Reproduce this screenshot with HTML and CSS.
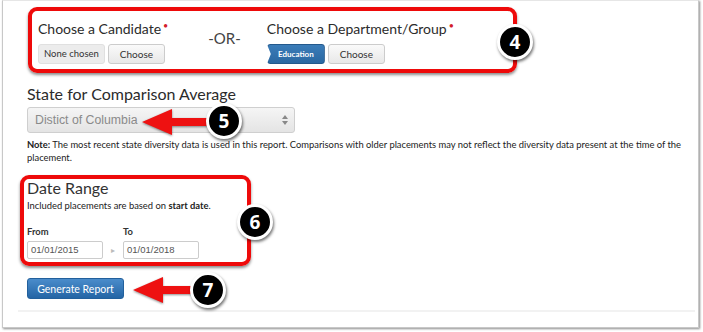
FILE: index.html
```html
<!DOCTYPE html>
<html lang="en">
<head>
    <meta charset="UTF-8"/>
    <title>Comparison Report</title>
    <link rel="stylesheet" href="styles.css">
</head>
<body>
<div class="frame">
    <div class="pickers">
        <div class="picker">
            <div class="picker-title">Choose a Candidate<span class="req">&bull;</span></div>
            <div class="picker-btns">
                <span class="chip">None chosen</span>
                <button class="btn">Choose</button>
            </div>
        </div>
        <div class="or">-OR-</div>
        <div class="picker">
            <div class="picker-title">Choose a Department/Group<span class="req">&bull;</span></div>
            <div class="picker-btns">
                <span class="tag">Education</span>
                <button class="btn">Choose</button>
            </div>
        </div>
    </div>

    <div class="field">
        <div class="field-label">State for Comparison Average</div>
        <div class="select">
            <span>Distict of Columbia</span>
            <svg class="updown" width="6" height="10" viewBox="0 0 6 10">
                <path d="M0 4 L3 0 L6 4 Z M0 6 L3 10 L6 6 Z" fill="#888"/>
            </svg>
        </div>
        <p class="note"><b>Note:</b> The most recent state diversity data is used in this report. Comparisons with older placements may not reflect the diversity data present at the time of the placement.</p>
    </div>

    <div class="dates">
        <div class="dates-title">Date Range</div>
        <p class="hint">Included placements are based on <b>start date</b>.</p>
        <div class="date-row">
            <div class="date-col">
                <div class="date-label">From</div>
                <div class="date-input">01/01/2015</div>
            </div>
            <span class="sep">&#9656;</span>
            <div class="date-col">
                <div class="date-label">To</div>
                <div class="date-input">01/01/2018</div>
            </div>
        </div>
    </div>

    <button class="gen">Generate Report</button>
    <div class="rule"></div>
</div>

<!-- annotations -->
<div class="mark-box box4"></div>
<div class="mark-box box6"></div>

<svg class="arrow arrow5" width="72" height="30" viewBox="0 0 72 30">
    <path d="M0 15 L30 2 L30 11 L72 11 L72 19 L30 19 L30 28 Z" fill="#ee1111"/>
</svg>
<svg class="arrow arrow7" width="68" height="30" viewBox="0 0 68 30">
    <path d="M0 15 L30 2 L30 11 L68 11 L68 19 L30 19 L30 28 Z" fill="#ee1111"/>
</svg>

<div class="badge badge4">4</div>
<div class="badge badge5">5</div>
<div class="badge badge6">6</div>
<div class="badge badge7">7</div>
</body>
</html>
```

FILE: styles.css
```css
body {
    margin: 0;
    background: #ffffff;
    font-family: Lato, "Open Sans", sans-serif;
    color: #333333;
    position: relative;
    width: 703px;
    height: 332px;
    overflow: hidden;
}

.frame {
    margin-left: 2px;
    width: 697px;
    height: 328px;
    box-sizing: border-box;
    border: 1px solid #c8c8c8;
    border-top-color: #e6e6e6;
    box-shadow: 1px 1px 2px rgba(0, 0, 0, 0.45);
    background: #ffffff;
    padding: 15px 0 0 24px;
}

/* candidate / department */
.pickers {
    display: flex;
    align-items: flex-start;
    padding-left: 11px;
}

.picker-title {
    font-size: 14px;
    line-height: 20px;
    color: #2b2b2b;
}

.req {
    color: #d3202a;
    font-size: 9px;
    vertical-align: 5px;
    margin-left: 2px;
}

.picker-btns {
    display: flex;
    gap: 3px;
    margin-top: 5px;
}

.chip,
.btn,
.tag {
    height: 20px;
    box-sizing: border-box;
    font-family: Lato, sans-serif;
    font-size: 9.5px;
    line-height: 18px;
    border-radius: 3px;
}

.chip {
    padding: 0 5px;
    background: #ececec;
    border: 1px solid #e0e0e0;
    color: #333333;
}

.btn {
    width: 57px;
    padding: 0;
    background: linear-gradient(#fafafa, #e8e8e8);
    border: 1px solid #cccccc;
    color: #333333;
    font-size: 10px;
}

.tag {
    width: 58px;
    text-align: center;
    background: linear-gradient(#3b7cb8, #2a68a2);
    border: 1px solid #24598c;
    color: #ffffff;
    font-weight: bold;
    font-size: 8px;
    clip-path: polygon(0 0, 100% 0, 100% 100%, 0 100%, 4px 50%);
}

.or {
    font-size: 15px;
    color: #444444;
    margin: 13px 26px 0 40px;
}

/* state select */
.field {
    margin-top: 20px;
}

.field-label {
    font-size: 16px;
    line-height: 20px;
    color: #2b2b2b;
}

.select {
    width: 268px;
    height: 26px;
    box-sizing: border-box;
    margin-top: 3px;
    display: flex;
    align-items: center;
    justify-content: space-between;
    padding: 0 6px 0 7px;
    border: 1px solid #cfcfcf;
    border-radius: 3px;
    background: linear-gradient(#f5f5f5, #e4e4e4);
    font-family: "Liberation Sans", Arial, sans-serif;
    font-size: 12.3px;
    color: #8a8a8a;
}

.note {
    margin: 5px 10px 0 0;
    font-size: 9.4px;
    line-height: 13px;
    color: #222222;
}

/* date range */
.dates {
    margin-top: 14px;
}

.dates-title {
    font-size: 16px;
    line-height: 20px;
    color: #333333;
}

.hint {
    margin: 2px 0 0;
    font-size: 9.4px;
    line-height: 12px;
    color: #222222;
}

.date-row {
    display: flex;
    align-items: flex-end;
    margin-top: 14px;
}

.date-label {
    font-size: 9.4px;
    font-weight: bold;
    line-height: 12px;
    margin-bottom: 3px;
}

.date-input {
    width: 76px;
    height: 18px;
    box-sizing: border-box;
    border: 1px solid #cccccc;
    border-radius: 2px;
    padding-left: 3px;
    font-family: "Liberation Sans", Arial, sans-serif;
    font-size: 9.5px;
    line-height: 16px;
    color: #555555;
}

.sep {
    width: 20px;
    text-align: center;
    font-size: 8px;
    color: #bbbbbb;
    line-height: 18px;
}

.gen {
    display: block;
    margin-top: 19px;
    width: 97px;
    height: 21px;
    padding: 0;
    border: 1px solid #22609c;
    border-radius: 3px;
    background: linear-gradient(#4a8ccb, #2465a5);
    color: #ffffff;
    font-family: Lato, sans-serif;
    font-size: 10.5px;
}

.rule {
    margin: 11px 3px 0 -9px;
    height: 2px;
    background: #f2f2f2;
}

/* annotation layer */
.mark-box {
    position: absolute;
    border: 4px solid #ee0a0a;
    border-radius: 9px;
    box-shadow: 0 2px 3px rgba(0, 0, 0, 0.45);
}

.box4 {
    left: 28px;
    top: 7px;
    width: 481px;
    height: 58px;
}

.box6 {
    left: 20px;
    top: 175px;
    width: 223px;
    height: 83px;
}

.arrow {
    position: absolute;
    filter: drop-shadow(0 1px 1px rgba(0, 0, 0, 0.45));
}

.arrow5 {
    left: 142px;
    top: 107px;
}

.arrow7 {
    left: 133px;
    top: 275px;
}

.badge {
    position: absolute;
    width: 30px;
    height: 30px;
    border: 3px solid #ffffff;
    border-radius: 50%;
    background: #000000;
    box-shadow: 1px 2px 3px rgba(0, 0, 0, 0.55);
    color: #ffffff;
    font-family: "Open Sans", "DejaVu Sans", sans-serif;
    font-weight: bold;
    font-size: 19px;
    line-height: 30px;
    text-align: center;
}

.badge4 {
    left: 497px;
    top: 24px;
}

.badge5 {
    left: 206px;
    top: 103px;
}

.badge6 {
    left: 237px;
    top: 204px;
}

.badge7 {
    left: 190px;
    top: 272px;
}
```
